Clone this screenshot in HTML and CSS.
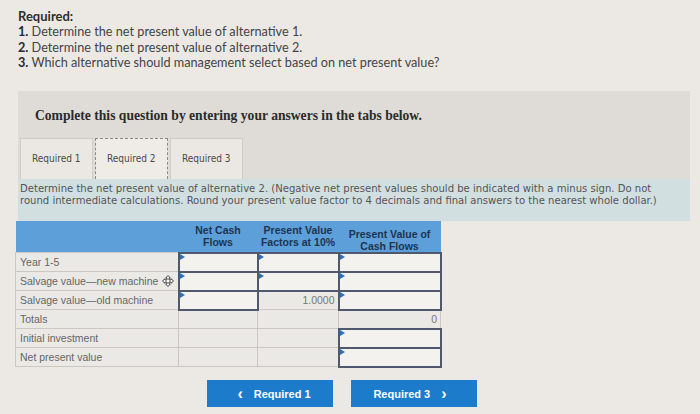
FILE: index.html
```html
<!DOCTYPE html>
<html>
<head>
<meta charset="utf-8">
<title>Required 2</title>
<link rel="stylesheet" href="styles.css">
</head>
<body>
<div class="required">
	<p class="req-title">Required:</p>
	<p class="req-item"><b>1.</b> Determine the net present value of alternative 1.</p>
	<p class="req-item"><b>2.</b> Determine the net present value of alternative 2.</p>
	<p class="req-item"><b>3.</b> Which alternative should management select based on net present value?</p>
</div>

<div class="question">
	<p class="complete">Complete this question by entering your answers in the tabs below.</p>
	<div class="tabs">
		<div class="tab">Required 1</div>
		<div class="tab active">Required 2</div>
		<div class="tab">Required 3</div>
	</div>
</div>

<div class="instructions">
	Determine the net present value of alternative 2. (Negative net present values should be indicated with a minus sign. Do not<br>
	round intermediate calculations. Round your present value factor to 4 decimals and final answers to the nearest whole dollar.)
</div>

<table class="npv">
	<tr class="head">
		<th class="label"></th>
		<th class="c2">Net Cash<br>Flows</th>
		<th class="c3">Present Value<br>Factors at 10%</th>
		<th class="c4">Present Value of<br>Cash Flows</th>
	</tr>
	<tr>
		<td class="label">Year 1-5</td>
		<td class="input"></td>
		<td class="input"></td>
		<td class="input"></td>
	</tr>
	<tr>
		<td class="label">Salvage value—new machine
			<svg class="cursor" width="12" height="12" viewBox="0 0 12 12"><path d="M6 0.5 L8.3 3 H7 V5 H9 V3.7 L11.5 6 L9 8.3 V7 H7 V9 H8.3 L6 11.5 L3.7 9 H5 V7 H3 V8.3 L0.5 6 L3 3.7 V5 H5 V3 H3.7 Z" fill="#fff" stroke="#333" stroke-width="0.9" stroke-linejoin="round"/></svg>
		</td>
		<td class="input"></td>
		<td class="input"></td>
		<td class="input"></td>
	</tr>
	<tr>
		<td class="label">Salvage value—old machine</td>
		<td class="input"></td>
		<td class="num">1.0000</td>
		<td class="input"></td>
	</tr>
	<tr>
		<td class="label">Totals</td>
		<td></td>
		<td></td>
		<td class="num">0</td>
	</tr>
	<tr>
		<td class="label">Initial investment</td>
		<td></td>
		<td></td>
		<td class="input"></td>
	</tr>
	<tr>
		<td class="label">Net present value</td>
		<td></td>
		<td></td>
		<td class="input"></td>
	</tr>
</table>

<div class="nav">
	<div class="nav-btn prev"><span class="chev">&lsaquo;</span> Required 1</div>
	<div class="nav-btn next">Required 3 <span class="chev">&rsaquo;</span></div>
</div>
</body>
</html>
```

FILE: styles.css
```css
body {
	margin: 0;
	padding: 8px 10px 0 18px;
	background: #ece9e4; /* warm paper */
	color: #444;
	font-family: Lato, "Liberation Sans", sans-serif;
}
p {
	margin: 0;
}
.req-title {
	font-size: 13px;
	font-weight: bold;
	line-height: 16px;
	color: #2e2e2e;
}
.req-item {
	font-size: 12.7px;
	line-height: 15.5px;
}
.req-item b {
	color: #2a2a2a;
}
.question {
	margin-top: 20px;
	width: 672px;
	background: #dfdcd7;
}
.complete {
	padding: 17px 0 0 17px;
	height: 30px;
	font-family: "Liberation Serif", serif;
	font-weight: bold;
	font-size: 13.6px;
	color: #2b2b2b;
}
.tabs {
	display: flex;
	padding-left: 2px;
	height: 41px;
}
.tab {
	width: 73px;
	height: 41px;
	box-sizing: border-box;
	border: 1px solid #cfccc6;
	border-bottom: none;
	background: #ebe8e3;
	font-family: "DejaVu Sans Condensed", "DejaVu Sans", sans-serif;
	font-size: 10px;
	color: #4a4a4a;
	padding: 14px 0 0 11px;
	margin-right: 2px;
}
.tab.active {
	border: 1px dashed #8a8a8a;
	border-bottom: none;
	background: #efece7;
}
.instructions {
	width: 668px;
	height: 38px;
	padding: 4px 2px 0 2px;
	background: #d2dfe0;
	font-family: "DejaVu Sans Condensed", "DejaVu Sans", sans-serif;
	font-size: 11.2px;
	line-height: 12px;
	color: #555;
}
table.npv {
	margin-left: -3px;
	border-collapse: collapse;
	font-family: "Liberation Sans", Arial, sans-serif;
	font-size: 10.5px;
}
.npv th {
	background: #5c9fd9;
	color: #1f3450;
	font-weight: bold;
	font-size: 10.5px;
	line-height: 12px;
	height: 30px;
	padding: 0;
	vertical-align: top;
	padding-top: 3px;
	box-sizing: border-box;
	text-align: center;
}
.npv .head .c4 {
	vertical-align: middle;
	padding-top: 7px;
}
.npv td {
	height: 19px;
	padding: 0 3px;
	border: 1px solid #cbc8c3;
	background: #ebe9e5;
	box-sizing: border-box;
	color: #6a6a6a;
}
.npv td.label {
	width: 163px;
	padding-left: 4px;
	color: #666;
	white-space: nowrap;
}
.npv .c2 {
	width: 79px;
}
.npv .c3 {
	width: 81px;
}
.npv .c4 {
	width: 102px;
}
.npv td.input {
	position: relative;
	border: 2px solid #50596c;
	background: #f3f2ef;
}
.npv td.input::before {
	content: "";
	position: absolute;
	left: 0;
	top: 0;
	border-left: 5px solid #2d6fb8;
	border-top: 3px solid transparent;
	border-bottom: 3px solid transparent;
}
.npv td.num {
	text-align: right;
	color: #777;
}
.cursor {
	vertical-align: -2px;
	margin-left: 1px;
}
.nav {
	display: flex;
	gap: 18px;
	margin: 12px 0 0 189px;
}
.nav-btn {
	width: 126px;
	height: 27px;
	line-height: 27px;
	background: #1c7bcb;
	color: #fff;
	text-align: center;
	font-family: "Liberation Sans", Arial, sans-serif;
	font-weight: bold;
	font-size: 11px;
}
.nav-btn .chev {
	font-size: 16px;
	vertical-align: -1px;
	margin: 0 8px;
}
```
